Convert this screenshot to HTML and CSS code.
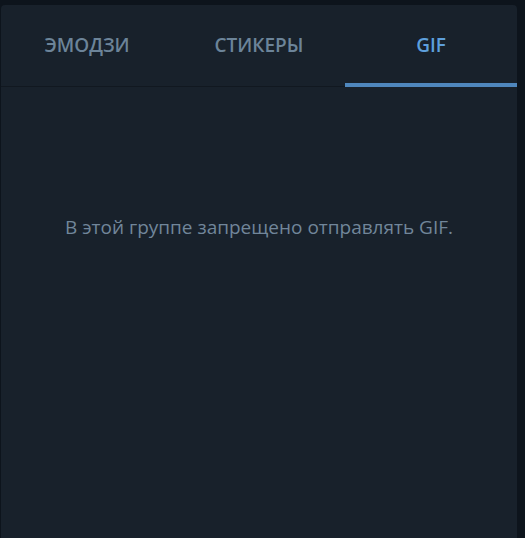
FILE: index.html
```html
<!DOCTYPE html>
<html lang="ru">
<head>
  <meta charset="UTF-8">
  <title>GIF</title>
  <link rel="stylesheet" href="styles.css">
</head>
<body>
  <div class="panel">
    <div class="tabs">
      <div class="tab">Эмодзи</div>
      <div class="tab">Стикеры</div>
      <div class="tab active">GIF</div>
    </div>
    <div class="content">
      <p class="message">В этой группе запрещено отправлять GIF.</p>
    </div>
  </div>
</body>
</html>
```

FILE: styles.css
```css
body {
  margin: 0;
  background: #0d141c;
  font-family: "Open Sans", sans-serif;
}
.panel {
  margin: 5px 0 0 1px;
  width: 516px;
  height: 533px;
  background: #18212b;
  border-radius: 4px 4px 0 0;
  display: flex;
  flex-direction: column;
}
.tabs {
  display: flex;
  height: 81px;
  border-bottom: 1px solid #111820;
}
.tab {
  flex: 1;
  display: flex;
  align-items: center;
  justify-content: center;
  padding-top: 2px;
  font-size: 19px;
  font-weight: 600;
  text-transform: uppercase;
  color: #6c8499;
  border-bottom: 4px solid transparent;
  margin-bottom: -1px;
}
.tab.active {
  color: #5d9fdc;
  border-bottom-color: #4f87bd;
}
.content {
  flex: 1;
  display: flex;
  justify-content: center;
}
.message {
  margin: 127px 0 0;
  font-size: 19px;
  color: #71869a;
}
```
